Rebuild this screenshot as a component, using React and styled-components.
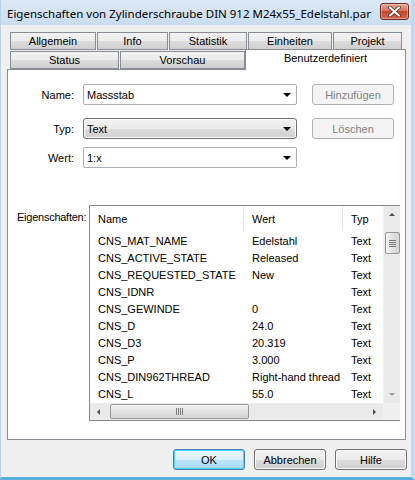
import styled, { createGlobalStyle } from 'styled-components'

const GlobalStyle = createGlobalStyle`
    html, body {
        margin: 0;
        padding: 0;
        background: #ffffff;
    }
    * {
        box-sizing: border-box;
    }
`

const Window = styled.div`
    width: 415px;
    height: 480px;
    overflow: hidden;
    display: flex;
    flex-direction: column;
    background: #f0f0f0;
    border-left: 1px solid #b9d1ea;
    border-right: 4px solid #c5d9ee;
    border-bottom: 3px solid #5ab0dc;
    font-family: "Liberation Sans", Arial, sans-serif;
    font-size: 11px;
    color: #000;
`

const TitleBar = styled.div`
    height: 25px;
    flex-shrink: 0;
    display: flex;
    align-items: center;
    justify-content: space-between;
    padding: 0 2px 0 6px;
    background: linear-gradient(#dde9f5, #c9dcf0);
`

const Title = styled.div`
    font-family: "Noto Sans", "Open Sans", sans-serif;
    font-size: 11.5px;
    color: #000;
    padding-top: 1px;
`

const CloseButton = styled.div`
    width: 29px;
    height: 17px;
    margin-top: -2px;
    border: 1px solid #6b2a22;
    border-radius: 3px;
    background: linear-gradient(#e6a595 0%, #d5735e 45%, #c2452c 50%, #d2694f 100%);
    display: flex;
    align-items: center;
    justify-content: center;
    box-shadow: inset 0 0 0 1px rgba(255, 255, 255, 0.35);
`

const Body = styled.div`
    flex: 1;
    display: flex;
    flex-direction: column;
    padding: 8px 0 0 6px;
`

const TabRow = styled.div`
    display: flex;
    height: ${(p) => p.h}px;
    padding-left: 3px;
    align-items: flex-end;
    position: relative;
    z-index: ${(p) => p.z};
`

const Tab = styled.div`
    width: ${(p) => p.w}px;
    height: ${(p) => (p.active ? 21 : 18)}px;
    margin-right: ${(p) => p.gap || 0}px;
    margin-bottom: ${(p) => (p.active ? -1 : 0)}px;
    display: flex;
    align-items: ${(p) => (p.active ? 'flex-start' : 'center')};
    padding-top: ${(p) => (p.active ? 2 : 0)}px;
    justify-content: center;
    border: 1px solid #898c95;
    border-bottom: ${(p) => (p.active ? 'none' : '1px solid #898c95')};
    background: ${(p) => (p.active ? '#ffffff' : 'linear-gradient(#f2f2f2 0%, #ebebeb 50%, #dddddd 51%, #cfcfcf 100%)')};
`

const Panel = styled.div`
    width: 399px;
    height: 371px;
    background: #ffffff;
    border: 1px solid #898c95;
    display: flex;
    flex-direction: column;
    padding: 14px 0 0 0;
`

const FormRow = styled.div`
    display: flex;
    align-items: center;
    height: 21px;
    margin-top: ${(p) => p.top || 0}px;
`

const Label = styled.div`
    width: 75px;
    text-align: right;
    padding-right: 9px;
`

const Combo = styled.div`
    width: 214px;
    height: 21px;
    display: flex;
    align-items: center;
    justify-content: space-between;
    padding: 0 5px 0 3px;
    border: 1px solid ${(p) => (p.button ? '#707070' : '#abadb3')};
    border-radius: ${(p) => (p.button ? 3 : 2)}px;
    background: ${(p) => (p.button ? 'linear-gradient(#f2f2f2 0%, #ebebeb 50%, #dddddd 51%, #cfcfcf 100%)' : '#ffffff')};
    box-shadow: ${(p) => (p.button ? 'inset 0 0 0 1px #fcfcfc' : 'none')};
`

const Arrow = styled.div`
    width: 0;
    height: 0;
    border-left: 4px solid transparent;
    border-right: 4px solid transparent;
    border-top: 4px solid #000;
`

const SideButton = styled.div`
    width: 82px;
    height: 21px;
    margin-left: 15px;
    display: flex;
    align-items: center;
    justify-content: center;
    border: 1px solid #adb2b5;
    border-radius: 3px;
    background: #f4f4f4;
    color: #838383;
`

const PropsRow = styled.div`
    display: flex;
    margin-top: 37px;
    padding-left: 9px;
`

const PropsLabel = styled.div`
    width: 72px;
    padding-top: 6px;
    letter-spacing: -0.25px;
    white-space: nowrap;
`

const ListView = styled.div`
    width: 311px;
    height: 216px;
    border: 1px solid #828790;
    display: grid;
    grid-template-columns: 293px 17px;
    grid-template-rows: 197px 17px;
    background: #ffffff;
`

const ListBody = styled.div`
    overflow: hidden;
`

const HeaderRow = styled.div`
    display: flex;
    height: 26px;
    align-items: center;
    border-bottom: 1px solid #ffffff;
`

const HeaderCell = styled.div`
    width: ${(p) => p.w}px;
    flex-shrink: 0;
    height: 100%;
    display: flex;
    align-items: center;
    padding-left: 8px;
    border-right: ${(p) => (p.last ? 'none' : '1px solid #e5e5e5')};
`

const Row = styled.div`
    display: flex;
    height: 17px;
    align-items: center;
`

const Cell = styled.div`
    width: ${(p) => p.w}px;
    flex-shrink: 0;
    padding-left: 8px;
    white-space: nowrap;
    overflow: hidden;
`

const VScroll = styled.div`
    background: #eaeaea;
    border-left: 1px solid #f0f0f0;
    display: flex;
    flex-direction: column;
    align-items: center;
`

const HScroll = styled.div`
    background: #eaeaea;
    display: flex;
    align-items: center;
`

const Corner = styled.div`
    background: #f0f0f0;
`

const ArrowBox = styled.div`
    width: 17px;
    height: 17px;
    display: flex;
    align-items: center;
    justify-content: center;
    flex-shrink: 0;
`

const ScrollArrow = styled.div`
    width: 0;
    height: 0;
    ${(p) => p.dir === 'up' && `
        border-left: 3px solid transparent;
        border-right: 3px solid transparent;
        border-bottom: 3px solid ${p.color};
    `}
    ${(p) => p.dir === 'down' && `
        border-left: 3px solid transparent;
        border-right: 3px solid transparent;
        border-top: 3px solid ${p.color};
    `}
    ${(p) => p.dir === 'left' && `
        border-top: 3px solid transparent;
        border-bottom: 3px solid transparent;
        border-right: 3px solid ${p.color};
    `}
    ${(p) => p.dir === 'right' && `
        border-top: 3px solid transparent;
        border-bottom: 3px solid transparent;
        border-left: 3px solid ${p.color};
    `}
`

const Track = styled.div`
    flex: 1;
    display: flex;
    flex-direction: ${(p) => (p.vertical ? 'column' : 'row')};
    align-items: center;
`

const Thumb = styled.div`
    width: ${(p) => (p.vertical ? 15 : p.len)}px;
    height: ${(p) => (p.vertical ? p.len : 15)}px;
    margin: ${(p) => (p.vertical ? `${p.offset}px 0 0 0` : `0 0 0 ${p.offset}px`)};
    border: 1px solid #979797;
    border-radius: 2px;
    background: ${(p) => (p.vertical ? 'linear-gradient(90deg, #f3f3f3, #e2e2e2 50%, #d4d4d4)' : 'linear-gradient(#f3f3f3, #e2e2e2 50%, #d4d4d4)')};
    display: flex;
    flex-direction: ${(p) => (p.vertical ? 'column' : 'row')};
    align-items: center;
    justify-content: center;
    gap: 1px;
`

const Grip = styled.div`
    width: ${(p) => (p.vertical ? 7 : 1)}px;
    height: ${(p) => (p.vertical ? 1 : 7)}px;
    background: #7a7a7a;
`

const Footer = styled.div`
    display: flex;
    justify-content: flex-end;
    gap: 9px;
    padding: 9px 4px 0 0;
`

const DialogButton = styled.div`
    width: 72px;
    height: 21px;
    display: flex;
    align-items: center;
    justify-content: center;
    border: 1px solid ${(p) => (p.primary ? '#3c7fb1' : '#707070')};
    border-radius: 3px;
    background: ${(p) => (p.primary
        ? 'linear-gradient(#eaf6fd 0%, #d9f0fc 50%, #bee6fd 51%, #a7d9f5 100%)'
        : 'linear-gradient(#f2f2f2 0%, #ebebeb 50%, #dddddd 51%, #cfcfcf 100%)')};
    box-shadow: inset 0 0 0 1px ${(p) => (p.primary ? '#48d7fb' : '#fcfcfc')};
`

const rows = [
    ['CNS_MAT_NAME', 'Edelstahl', 'Text'],
    ['CNS_ACTIVE_STATE', 'Released', 'Text'],
    ['CNS_REQUESTED_STATE', 'New', 'Text'],
    ['CNS_IDNR', '', 'Text'],
    ['CNS_GEWINDE', '0', 'Text'],
    ['CNS_D', '24.0', 'Text'],
    ['CNS_D3', '20.319', 'Text'],
    ['CNS_P', '3.000', 'Text'],
    ['CNS_DIN962THREAD', 'Right-hand thread', 'Text'],
    ['CNS_L', '55.0', 'Text'],
]

function App() {
    return (
        <Window>
            <GlobalStyle />
            <TitleBar>
                <Title>Eigenschaften von Zylinderschraube DIN 912 M24x55_Edelstahl.par</Title>
                <CloseButton>
                    <svg width="13" height="11" viewBox="0 0 13 11">
                        <path d="M2 1.5 L11 9.5 M11 1.5 L2 9.5" stroke="#5a2018" strokeWidth="3.6" strokeLinecap="round" />
                        <path d="M2 1.5 L11 9.5 M11 1.5 L2 9.5" stroke="#ffffff" strokeWidth="2.2" strokeLinecap="round" />
                    </svg>
                </CloseButton>
            </TitleBar>

            <Body>
                <TabRow h={17} z={1}>
                    <Tab w={86} gap={1}>Allgemein</Tab>
                    <Tab w={71} gap={1}>Info</Tab>
                    <Tab w={78} gap={1}>Statistik</Tab>
                    <Tab w={84} gap={1}>Einheiten</Tab>
                    <Tab w={69}>Projekt</Tab>
                </TabRow>
                <TabRow h={19} z={2}>
                    <Tab w={109} gap={1}>Status</Tab>
                    <Tab w={125}>Vorschau</Tab>
                    <Tab w={161} active>Benutzerdefiniert</Tab>
                </TabRow>

                <Panel>
                    <FormRow>
                        <Label>Name:</Label>
                        <Combo>Massstab<Arrow /></Combo>
                        <SideButton>Hinzufügen</SideButton>
                    </FormRow>
                    <FormRow top={13}>
                        <Label>Typ:</Label>
                        <Combo button>Text<Arrow /></Combo>
                        <SideButton>Löschen</SideButton>
                    </FormRow>
                    <FormRow top={8}>
                        <Label>Wert:</Label>
                        <Combo>1:x<Arrow /></Combo>
                    </FormRow>

                    <PropsRow>
                        <PropsLabel>Eigenschaften:</PropsLabel>
                        <ListView>
                            <ListBody>
                                <HeaderRow>
                                    <HeaderCell w={154}>Name</HeaderCell>
                                    <HeaderCell w={99}>Wert</HeaderCell>
                                    <HeaderCell w={60} last>Typ</HeaderCell>
                                </HeaderRow>
                                {rows.map((r) => (
                                    <Row key={r[0]}>
                                        <Cell w={154}>{r[0]}</Cell>
                                        <Cell w={99}>{r[1]}</Cell>
                                        <Cell w={60}>{r[2]}</Cell>
                                    </Row>
                                ))}
                            </ListBody>
                            <VScroll>
                                <ArrowBox><ScrollArrow dir="up" color="#4d4d4d" /></ArrowBox>
                                <Track vertical>
                                    <Thumb vertical len={22} offset={9}>
                                        <Grip vertical /><Grip vertical /><Grip vertical /><Grip vertical />
                                    </Thumb>
                                </Track>
                                <ArrowBox><ScrollArrow dir="down" color="#9a9a9a" /></ArrowBox>
                            </VScroll>
                            <HScroll>
                                <ArrowBox><ScrollArrow dir="left" color="#4d4d4d" /></ArrowBox>
                                <Track>
                                    <Thumb len={139} offset={3}>
                                        <Grip /><Grip /><Grip /><Grip />
                                    </Thumb>
                                </Track>
                                <ArrowBox><ScrollArrow dir="right" color="#4d4d4d" /></ArrowBox>
                            </HScroll>
                            <Corner />
                        </ListView>
                    </PropsRow>
                </Panel>

                <Footer>
                    <DialogButton primary>OK</DialogButton>
                    <DialogButton>Abbrechen</DialogButton>
                    <DialogButton>Hilfe</DialogButton>
                </Footer>
            </Body>
        </Window>
    )
}

export default App
